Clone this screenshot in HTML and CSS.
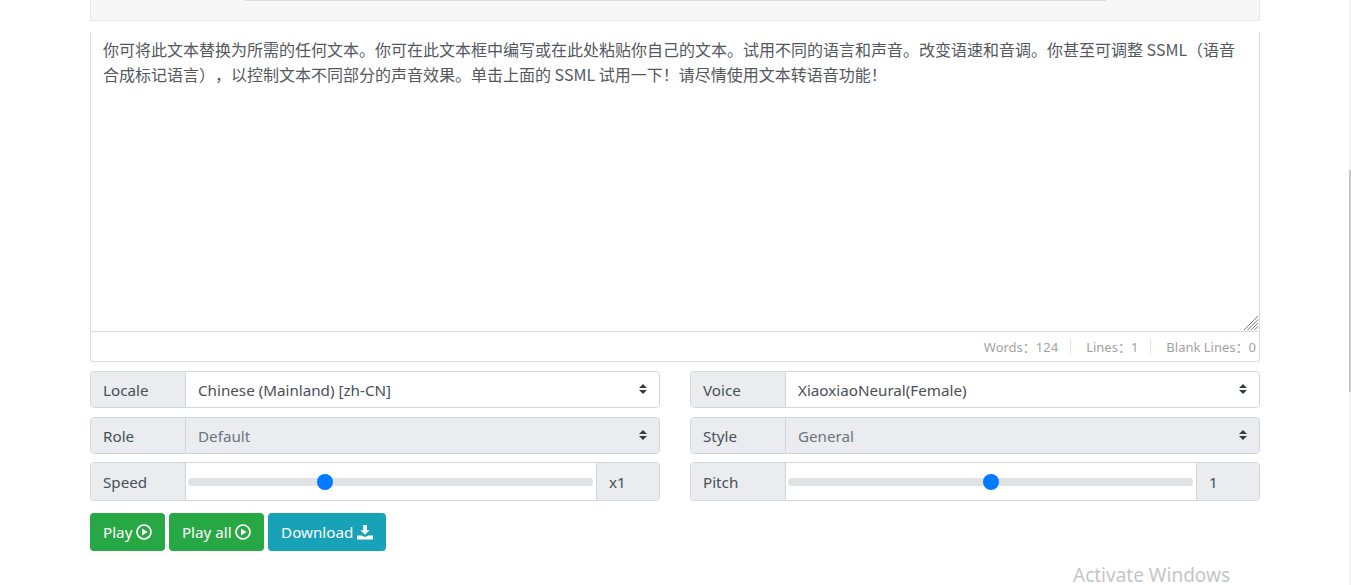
FILE: index.html
```html
<!DOCTYPE html>
<html lang="zh-CN">
<head>
<meta charset="utf-8">
<title>Text to speech</title>
<link rel="stylesheet" href="styles.css">
</head>
<body>
<div class="page">
  <div class="toolbar"><div class="toolbar-line"></div></div>
  <div class="editor">
    <div class="editor-text">你可将此文本替换为所需的任何文本。你可在此文本框中编写或在此处粘贴你自己的文本。试用不同的语言和声音。改变语速和音调。你甚至可调整 SSML（语音合成标记语言），以控制文本不同部分的声音效果。单击上面的 SSML 试用一下！请尽情使用文本转语音功能！
      <svg class="resize" viewBox="0 0 16 16"><path d="M1 15 15 1M4.5 15 15 4.5M8 15 15 8M11.5 15 15 11.5" fill="none" stroke="#777" stroke-width="1"/></svg>
    </div>
    <div class="editor-foot">
      <span class="stat">Words：124</span><span class="stat">Lines：1</span><span class="stat">Blank Lines：0</span>
    </div>
  </div>
  <div class="controls">
    <div class="group">
      <span class="label">Locale</span>
      <div class="select"><span>Chinese (Mainland) [zh-CN]</span><svg class="caret" viewBox="0 0 8 12"><path d="M4 1 8 5H0zM0 7H8L4 11z"/></svg></div>
    </div>
    <div class="group">
      <span class="label">Voice</span>
      <div class="select"><span>XiaoxiaoNeural(Female)</span><svg class="caret" viewBox="0 0 8 12"><path d="M4 1 8 5H0zM0 7H8L4 11z"/></svg></div>
    </div>
    <div class="group">
      <span class="label">Role</span>
      <div class="select disabled"><span>Default</span><svg class="caret" viewBox="0 0 8 12"><path d="M4 1 8 5H0zM0 7H8L4 11z"/></svg></div>
    </div>
    <div class="group">
      <span class="label">Style</span>
      <div class="select disabled"><span>General</span><svg class="caret" viewBox="0 0 8 12"><path d="M4 1 8 5H0zM0 7H8L4 11z"/></svg></div>
    </div>
    <div class="group tall">
      <span class="label">Speed</span>
      <div class="range"><div class="track"><div class="thumb" style="left:33.8%"></div></div></div>
      <span class="suffix">x1</span>
    </div>
    <div class="group tall">
      <span class="label">Pitch</span>
      <div class="range"><div class="track"><div class="thumb" style="left:50%"></div></div></div>
      <span class="suffix">1</span>
    </div>
  </div>
  <div class="actions">
    <button class="btn green">Play <svg class="icon" viewBox="0 0 16 16"><circle cx="8" cy="8" r="7" fill="none" stroke="currentColor" stroke-width="1.7"/><path d="M6 4.4 11.6 8 6 11.6z" fill="currentColor"/></svg></button>
    <button class="btn green">Play all <svg class="icon" viewBox="0 0 16 16"><circle cx="8" cy="8" r="7" fill="none" stroke="currentColor" stroke-width="1.7"/><path d="M6 4.4 11.6 8 6 11.6z" fill="currentColor"/></svg></button>
    <button class="btn teal">Download <svg class="icon" viewBox="0 0 16 16"><path d="M6.2 1H9.8V6.2H12.6L8 10.8 3.4 6.2H6.2zM0 11.4H4.6L8 13 11.4 11.4H16V15.4H0z" fill="currentColor"/></svg></button>
  </div>
</div>
<div class="watermark">Activate Windows</div>
<div class="scrollbar"><div class="scrollbar-thumb"></div></div>
</body>
</html>
```
FILE: styles.css
```css
* { box-sizing: border-box; }
html, body { margin: 0; height: 585px; overflow: hidden; background: #fff; }
body { font-family: "Noto Sans", "Noto Sans CJK SC", sans-serif; font-size: 15.2px; color: #495057; position: relative; }
.page { width: 1170px; margin-left: 90px; }
.toolbar { height: 21px; background: #f7f7f7; border: 1px solid #e8e8e8; border-top: 0; padding-left: 154px; }
.toolbar-line { width: 861px; height: 1px; background: #dcdcdc; }
.editor { margin-top: 11px; height: 330px; border: 1px solid #dcdcdc; border-top: 0; border-radius: 0 0 3px 3px; display: flex; flex-direction: column; }
.editor-text { flex: 1; position: relative; padding: 5px 12px; font-family: "Noto Sans CJK SC", "Noto Sans", sans-serif; line-height: 25px; font-size: 16px; color: #54585d; text-spacing-trim: space-all; }
.resize { position: absolute; right: 0; bottom: 0; width: 16px; height: 16px; }
.editor-foot { height: 30px; border-top: 1px solid #dcdcdc; display: flex; justify-content: flex-end; align-items: center; padding-right: 3px; font-size: 13px; color: #a3a3a3; }
.stat { padding: 0 0 0 15px; }
.stat + .stat { margin-left: 12px; border-left: 1px solid #e4e4e4; line-height: 16px; }
.controls { margin-top: 9px; display: grid; grid-template-columns: 570px 570px; column-gap: 30px; row-gap: 9px; }
.group { display: flex; height: 37px; border: 1px solid #d2d6da; border-radius: 4px; overflow: hidden; }
.group.tall { height: 39px; margin-top: -1px; }
.label { width: 95px; flex: none; display: flex; align-items: center; padding-left: 12px; background: #eaecef; border-right: 1px solid #d2d6da; }
.select { flex: 1; display: flex; align-items: center; justify-content: space-between; padding: 0 12px; background: #fff; }
.select.disabled { background: #eaecef; color: #6c757d; }
.caret { width: 8px; height: 12px; margin-top: -2px; fill: #343a40; }
.range { flex: 1; display: flex; align-items: center; padding: 0 3px 0 2px; background: #fff; }
.track { position: relative; flex: 1; height: 8px; background: #e0e2e4; border-radius: 4px; }
.thumb { position: absolute; top: -4px; width: 16px; height: 16px; margin-left: -8px; background: #007bff; border-radius: 50%; }
.suffix { width: 63px; flex: none; display: flex; align-items: center; padding-left: 12px; background: #eaecef; border-left: 1px solid #d2d6da; }
.actions { margin-top: 12px; display: flex; gap: 4px; }
.btn { height: 38px; padding: 0 12px; border: 1px solid transparent; border-radius: 4px; color: #fff; font: inherit; display: flex; align-items: center; gap: 3.5px; }
.green { background: #28a745; }
.teal { background: #17a2b8; }
.icon { width: 16px; height: 16px; }
.watermark { position: absolute; left: 1073px; top: 566px; font-size: 19px; line-height: 19px; color: #c4c6c8; }
.scrollbar { position: absolute; right: 0; top: 0; width: 2px; height: 585px; background: #f3f3f3; }
.scrollbar-thumb { position: absolute; top: 170px; left: 0; width: 2px; height: 222px; background: #c8c8c8; }
```
